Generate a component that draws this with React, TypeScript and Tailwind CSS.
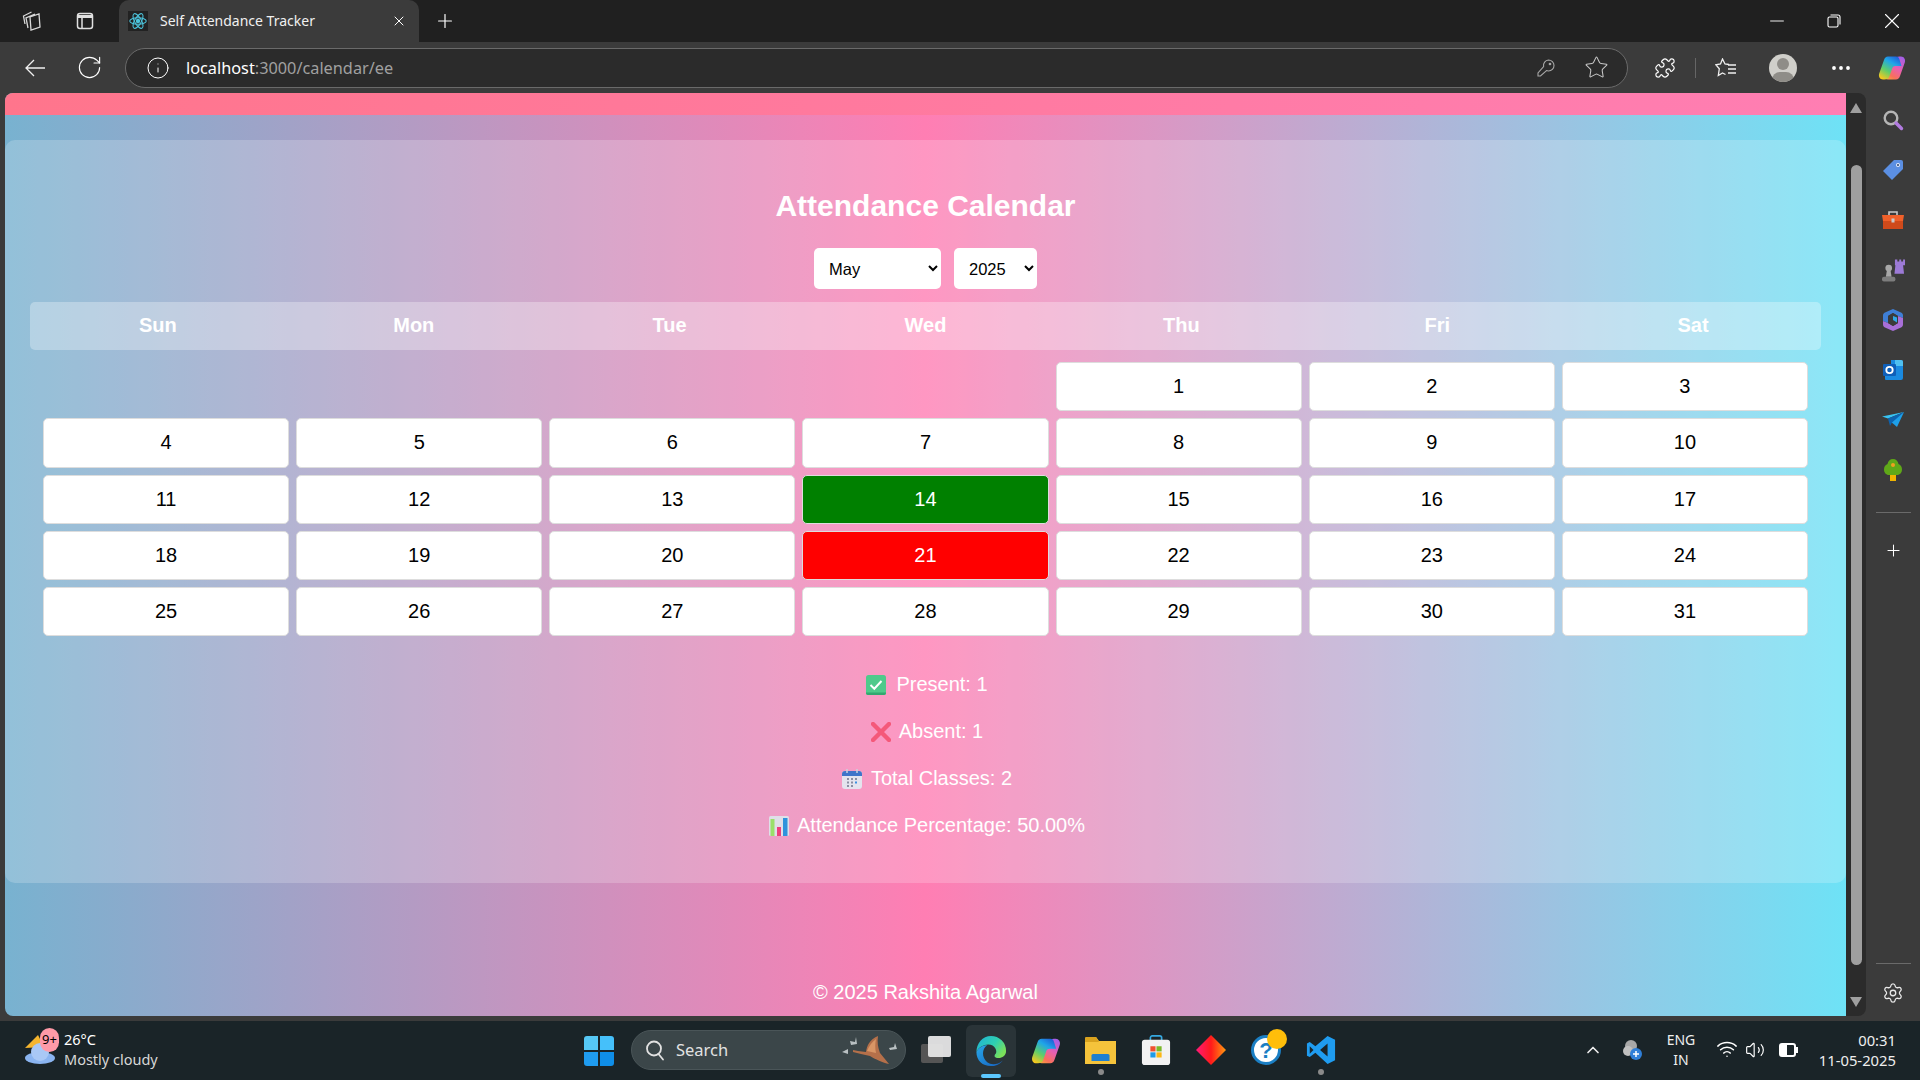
import { ChevronUp, Plus, X, Minus, RotateCw, Info, Star, Puzzle, MoreHorizontal, Settings, Volume2, Wifi } from "lucide-react";

const weekDays = ["Sun", "Mon", "Tue", "Wed", "Thu", "Fri", "Sat"];
const days = Array.from({ length: 31 }, (_, i) => i + 1);

function ReactIcon() {
  return (
    <svg width="18" height="18" viewBox="0 0 24 24" fill="none" stroke="#4cc4dc" strokeWidth="1.4">
      <circle cx="12" cy="12" r="2.2" fill="#4cc4dc" />
      <ellipse cx="12" cy="12" rx="11" ry="4.4" />
      <ellipse cx="12" cy="12" rx="11" ry="4.4" transform="rotate(60 12 12)" />
      <ellipse cx="12" cy="12" rx="11" ry="4.4" transform="rotate(120 12 12)" />
    </svg>
  );
}

function CopilotIcon({ size = 28 }: { size?: number }) {
  const ribbon =
    "M10 2.500H18C20 2.500 21 3.500 21.500 5.500L23.500 12H17.500C15.500 12 14.500 13 14 15L11.500 22C10.800 24.500 9 25.500 6.500 25.500H5C2 25.500.2 22.500 1.200 19.500L6 6C6.700 3.700 8 2.500 10 2.500z";
  return (
    <svg width={size} height={size} viewBox="0 0 28 28">
      <defs>
        <linearGradient id="cpa" x1="0.2" y1="1" x2="0.8" y2="0">
          <stop offset="0" stopColor="#f6c81e" />
          <stop offset="0.35" stopColor="#5fce6a" />
          <stop offset="0.7" stopColor="#1fa6e8" />
          <stop offset="1" stopColor="#1f5fd8" />
        </linearGradient>
        <linearGradient id="cpb" x1="0.2" y1="1" x2="0.8" y2="0">
          <stop offset="0" stopColor="#a45fe6" />
          <stop offset="0.45" stopColor="#e85fb0" />
          <stop offset="0.8" stopColor="#f8705a" />
          <stop offset="1" stopColor="#f8a53c" />
        </linearGradient>
      </defs>
      <path d={ribbon} fill="url(#cpb)" transform="rotate(180 14 14)" />
      <path d={ribbon} fill="url(#cpa)" />
    </svg>
  );
}

function CalendarCell({ day }: { day: number }) {
  let tone = "bg-white text-black";
  if (day === 14) tone = "bg-[#008000] text-white";
  if (day === 21) tone = "bg-[#ff0000] text-white";
  return (
    <div className={`h-[49.300px] pb-[1px] rounded-[5px] border border-[#ddd] flex items-center justify-center text-[20px] ${tone}`}>
      {day}
    </div>
  );
}

function CheckEmoji() {
  return (
    <svg width="20" height="20" viewBox="0 0 20 20" className="shrink-0">
      <rect width="20" height="20" rx="2.500" fill="#4fca8b" />
      <path d="M0 17.500V18a2 2 0 0 0 2 2h16a2 2 0 0 0 2-2v-.500z" fill="#32a870" />
      <path d="M4.500 10l3.800 3.700L15.500 6" fill="none" stroke="#fff" strokeWidth="2" />
    </svg>
  );
}

function CrossEmoji() {
  return (
    <svg width="20" height="20" viewBox="0 0 20 20" className="shrink-0">
      <path d="M2 2l16 16M18 2L2 18" stroke="#f4597a" strokeWidth="4.400" strokeLinecap="round" />
    </svg>
  );
}

function CalendarEmoji() {
  return (
    <svg width="20" height="20" viewBox="0 0 20 20" className="shrink-0">
      <rect y="2" width="20" height="18" rx="3" fill="#e4e4ee" />
      <path d="M0 7V5a3 3 0 0 1 3-3h14a3 3 0 0 1 3 3v2z" fill="#3f74c9" />
      <path d="M5 0v4M15 0v4" stroke="#c9d2de" strokeWidth="1.500" />
      <path d="M5 9h2v2H5zM9 9h2v2H9zM13 9h2v2h-2zM5 12.500h2v2H5zM9 12.500h2v2H9zM5 16h2v2H5zM9 16h2v2H9z" fill="#8b8fa3" />
      <path d="M13 12.500h2v2h-2z" fill="#3b8fe0" />
    </svg>
  );
}

function ChartEmoji() {
  return (
    <svg width="20" height="20" viewBox="0 0 20 20" className="shrink-0">
      <rect width="20" height="20" rx="1.500" fill="#dfdfe8" />
      <rect x="1.500" y="3" width="4" height="17" fill="#9ae06a" />
      <rect x="8" y="11" width="4" height="9" fill="#ee3f7c" />
      <rect x="14" y="2" width="4.500" height="18" fill="#2f93dc" />
    </svg>
  );
}

function SideIcons() {
  return (
    <div className="w-[54px] flex flex-col items-center text-white">
      <div className="h-[50px] flex items-center justify-center mt-[2px]">
        <svg width="22" height="22" viewBox="0 0 22 22" fill="none">
          <circle cx="9" cy="9" r="6.300" stroke="#b5b5b5" strokeWidth="2.400" />
          <path d="M14 14l5.500 5.500" stroke="#b27be0" strokeWidth="3.400" strokeLinecap="round" />
        </svg>
      </div>
      <div className="h-[50px] flex items-center justify-center">
        <svg width="22" height="22" viewBox="0 0 22 22">
          <path d="M12 1h7a2 2 0 0 1 2 2v7L10 21 1 12z" fill="#5b8fe3" />
          <circle cx="16" cy="6" r="2" fill="#e8eefb" />
          <circle cx="16" cy="6" r="1" fill="#28406e" />
        </svg>
      </div>
      <div className="h-[50px] flex items-center justify-center">
        <svg width="22" height="20" viewBox="0 0 22 20">
          <path d="M7 5V2h8v3" fill="none" stroke="#c9c9c9" strokeWidth="1.600" />
          <path d="M0 5h22l-1 6H1z" fill="#f0602a" />
          <path d="M1 11h20v8H1z" fill="#cf4a1b" />
          <rect x="9.500" y="8.500" width="3" height="4" fill="#c9c9c9" />
        </svg>
      </div>
      <div className="h-[50px] flex items-center justify-center">
        <svg width="23" height="23" viewBox="0 0 24 23">
          <path d="M13.500 0H16v2h2V0h2v2h2V0h2v6h-2l1 9H13l1-9h-.500z" fill="#9c7ad6" />
          <circle cx="7" cy="9" r="3.500" fill="#a8a8a8" />
          <path d="M5 12h4l1 6H4z" fill="#a8a8a8" />
          <rect y="18" width="14" height="5" rx="2" fill="#7d7d7d" />
        </svg>
      </div>
      <div className="h-[50px] flex items-center justify-center">
        <svg width="20" height="22" viewBox="0 0 20 22">
          <path d="M10 0l8 3.500c1.300.600 2 1.500 2 3V9l-5-2-5-3-5 3v7l-5-2V6.500c0-1.500.700-2.400 2-3z" fill="#3f7fd6" />
          <path d="M0 12l5 2 5 3 5-3V7l5 2v6.500c0 1.500-.700 2.400-2 3L10 22l-8-3.500c-1.300-.600-2-1.500-2-3z" fill="#a86fd8" />
          <path d="M5 7l5-3 5 3v7l-5 3-5-3z" fill="#3b3b3b" />
          <path d="M10 7l4 1.500v5L10 11z" fill="#2fa8e8" />
        </svg>
      </div>
      <div className="h-[50px] flex items-center justify-center">
        <svg width="20" height="20" viewBox="0 0 20 20">
          <path d="M8 0h10a2 2 0 0 1 2 2v16a2 2 0 0 1-2 2H3a1 1 0 0 1-1-1v-3h6z" fill="#1a8ae0" />
          <path d="M12 0h6a2 2 0 0 1 2 2v4h-8z" fill="#50c0f0" />
          <rect y="4" width="13" height="12" rx="1" fill="#0f5fb8" />
          <circle cx="6.500" cy="10" r="3.200" fill="none" stroke="#fff" strokeWidth="1.800" />
        </svg>
      </div>
      <div className="h-[50px] flex items-center justify-center">
        <svg width="22" height="16" viewBox="0 0 22 16">
          <path d="M0 4.500L22 0 6 6.500z" fill="#38c3f2" />
          <path d="M22 0L15 15 8 9z" fill="#1e9fe8" />
          <path d="M6 6.500L8 14l2-3.500L22 0z" fill="#0d63b0" />
        </svg>
      </div>
      <div className="h-[50px] flex items-center justify-center">
        <svg width="18" height="22" viewBox="0 0 18 22">
          <rect x="6" y="15" width="6" height="7" fill="#f0b400" />
          <path d="M9 0c3 0 5 2 5.500 5 2.500 1 3.500 3 3.500 5.500 0 3-2 5.500-5 5.500H5c-3 0-5-2.500-5-5.500C0 8 1 6 3.500 5 4 2 6 0 9 0z" fill="#5fa818" />
          <circle cx="9" cy="6" r="2" fill="#f0a020" />
        </svg>
      </div>
      <div className="w-[35px] h-[1px] bg-[#6a6a6a] mt-[17px] mb-[28px]" />
      <Plus size={19} strokeWidth={1.300} />
      <div className="flex-1" />
      <div className="w-[35px] h-[1px] bg-[#6a6a6a] mb-[18px]" />
      <Settings size={22} strokeWidth={1.400} className="mb-[12px] text-[#e8e8e8]" />
    </div>
  );
}

function Taskbar() {
  return (
    <div className="h-[59px] bg-[#1a2428] flex items-center relative text-white">
      <div className="absolute left-[24px] top-[7px] w-[36px] h-[42px]">
        <svg width="32" height="36" viewBox="0 0 32 36" className="absolute left-0 top-[1px]">
          <path d="M14 6l6 12-19 1z" fill="#f5b52e" />
          <ellipse cx="16" cy="29" rx="15" ry="6" fill="#8ab4f0" />
          <circle cx="16" cy="23" r="9" fill="#a9c8f5" />
        </svg>
        <div className="absolute left-[16px] top-0 w-[19px] h-[24px] rounded-full bg-[#ff9aa8] text-black text-[13px] font-['Noto_Sans'] flex items-center justify-center">
          9+
        </div>
      </div>
      <div className="ml-[64px] pb-[3px] font-['Noto_Sans',sans-serif] text-[14.500px] leading-[20px]">
        <div>26°C</div>
        <div className="text-[#d7d7d7]">Mostly cloudy</div>
      </div>
      <div className="absolute left-[584px] top-[15px]">
        <svg width="30" height="30" viewBox="0 0 30 30">
          <path d="M0 3a3 3 0 0 1 3-3h11v14H0z" fill="#56c8f5" />
          <path d="M16 0h11a3 3 0 0 1 3 3v11H16z" fill="#45c0fa" />
          <path d="M0 16h14v14H3a3 3 0 0 1-3-3z" fill="#1f9cf0" />
          <path d="M16 16h14v11a3 3 0 0 1-3 3H16z" fill="#0f8ee8" />
        </svg>
      </div>
      <div className="absolute left-[631px] top-[9px] w-[275px] h-[40px] rounded-full bg-[#3b4649] border border-[#4a5558] flex items-center pl-[12px] font-['Noto_Sans',sans-serif] text-[16.500px] text-[#e2e2e2]">
        <svg width="22" height="22" viewBox="0 0 22 22" fill="none" stroke="#e2e2e2" strokeWidth="1.800">
          <circle cx="10" cy="9.500" r="7" />
          <path d="M14.500 15l4.500 5.500" strokeLinecap="round" />
        </svg>
        <span className="ml-[10px]">Search</span>
        <svg width="62" height="30" viewBox="0 0 62 30" className="ml-auto mr-[4px]">
          <path d="M14 15l5 1 8 1c1-6 3-12 12-16-1 6 0 12 2 17l9 11c-6-1-14-5-19-8l-9-2-8-2z" fill="#b5704a" />
          <path d="M28 16c2-5 5-9 9-12-1 5-1 9 0 14z" fill="#d99666" />
          <path d="M11 6l5 1 1-5 1 7-6 1zM3 17l6-3 0 5zM50 13l5-1 1-4 2 6-7 1z" fill="#b9c0c2" />
        </svg>
      </div>
      <div className="absolute left-[920px] top-[14px] w-[32px] h-[30px]">
        <div className="absolute left-[1px] top-[9px] w-[22px] h-[19px] bg-[#555] rounded-[2px]" />
        <div className="absolute left-[8px] top-[1px] w-[23px] h-[21px] bg-[#e6e6e6] opacity-95 rounded-[2px]" />
      </div>
      <div className="absolute left-[966px] top-[4px] w-[50px] h-[52px] rounded-[6px] bg-[#2a3438] flex items-center justify-center">
        <svg width="32" height="32" viewBox="0 0 34 34">
          <defs>
            <linearGradient id="edge" x1="0" y1="0" x2="1" y2="0.600">
              <stop offset="0" stopColor="#1fb0d8" />
              <stop offset="0.6" stopColor="#2fd0b0" />
              <stop offset="1" stopColor="#7be05a" />
            </linearGradient>
            <linearGradient id="edgeb" x1="0" y1="0" x2="1" y2="1">
              <stop offset="0" stopColor="#28a8e8" />
              <stop offset="1" stopColor="#1560c0" />
            </linearGradient>
          </defs>
          <path d="M17 1A16 16 0 0 1 33 17C33 22 29 24.500 25 24.500C21 24.500 19.500 22.500 22 20C24 17 21.500 10 14 10C9 10 4 13 1.500 18C1.500 9 8 1 17 1z" fill="url(#edge)" />
          <path d="M1.500 18C4 13 9 11 13 11C7 15 7 24 13 29C17 32 24 32 29.500 27C26 32 21 33 17 33C8 33 1.500 27 1.500 18z" fill="url(#edgeb)" />
        </svg>
        <div className="absolute bottom-[-1px] w-[20px] h-[4px] rounded-full bg-[#5cc8ff]" />
      </div>
      <div className="absolute left-[1031px] top-[15px]"><CopilotIcon size={30} /></div>
      <div className="absolute left-[1085px] top-[16px]">
        <svg width="31" height="27" viewBox="0 0 31 27">
          <path d="M0 1.500A1.500 1.500 0 0 1 1.500 0H11l3 4h17v23H0z" fill="#f5c33b" />
          <path d="M0 1.500A1.500 1.500 0 0 1 1.500 0H11l3 5H0z" fill="#d9a21e" />
          <path d="M8 17h15a1.500 1.500 0 0 1 1.500 1.500V24H6.500v-5.500A1.500 1.500 0 0 1 8 17z" fill="#1f7fd0" />
        </svg>
      </div>
      <div className="absolute left-[1098px] top-[48px] w-[6px] h-[6px] rounded-full bg-[#8a8a8a]" />
      <div className="absolute left-[1141px] top-[14px]">
        <svg width="30" height="30" viewBox="0 0 30 32">
          <path d="M9 7V3a2 2 0 0 1 2-2h8a2 2 0 0 1 2 2v4" fill="none" stroke="#35a8e0" strokeWidth="1.800" />
          <rect y="5" width="30" height="27" rx="3" fill="#f2f2f2" />
          <rect x="9" y="12" width="5.500" height="5.500" fill="#f05030" />
          <rect x="15.500" y="12" width="5.500" height="5.500" fill="#7bb829" />
          <rect x="9" y="18.500" width="5.500" height="5.500" fill="#1f9be8" />
          <rect x="15.500" y="18.500" width="5.500" height="5.500" fill="#fcb814" />
        </svg>
      </div>
      <div className="absolute left-[1196px] top-[14px]">
        <svg width="30" height="30" viewBox="0 0 30 30">
          <defs>
            <linearGradient id="gem" x1="0" y1="0" x2="1" y2="0">
              <stop offset="0" stopColor="#ff1a78" />
              <stop offset="0.5" stopColor="#ff1a1a" />
              <stop offset="1" stopColor="#ff9a10" />
            </linearGradient>
          </defs>
          <path d="M15 0l15 15-15 15L0 15z" fill="url(#gem)" />
        </svg>
      </div>
      <div className="absolute left-[1251px] top-[8px] w-[40px] h-[42px]">
        <div className="absolute left-0 top-[6px] w-[30px] h-[30px] rounded-full bg-white flex items-center justify-center text-[#1b7fc4] text-[22px] font-bold font-['Liberation_Sans'] border-[3px] border-[#1b7fc4]">
          ?
        </div>
        <div className="absolute left-[16px] top-0 w-[20px] h-[20px] rounded-full bg-[#ffbe0a]" />
      </div>
      <div className="absolute left-[1306px] top-[14px]">
        <svg width="30" height="30" viewBox="0 0 32 32">
          <path d="M23 1l8 4v22l-8 4-13-12-6 4.500-3-1.500v-13l3-1.500 6 4.500z" fill="#1f9cf0" />
          <path d="M23 9l-8 7 8 7z" fill="#1a2428" />
          <path d="M4 12l4 4-4 4z" fill="#1a2428" />
        </svg>
      </div>
      <div className="absolute left-[1318px] top-[48px] w-[6px] h-[6px] rounded-full bg-[#8a8a8a]" />
      <ChevronUp size={20} strokeWidth={2} className="absolute left-[1583px] top-[19px] text-[#eee]" />
      <div className="absolute left-[1621px] top-[17px]">
        <svg width="22" height="24" viewBox="0 0 22 24">
          <circle cx="10" cy="8" r="6" fill="#a8a8a8" />
          <circle cx="7" cy="13" r="5" fill="#c0c0c0" />
          <circle cx="15" cy="16" r="6" fill="#2f7fd8" />
          <path d="M12 16h6M15 13v6" stroke="#fff" strokeWidth="1.500" />
        </svg>
      </div>
      <div className="absolute left-[1662px] top-[9px] w-[38px] text-center font-['Noto_Sans',sans-serif] text-[14px] leading-[20px] text-[#eee]">
        <div>ENG</div>
        <div>IN</div>
      </div>
      <Wifi size={22} strokeWidth={1.700} className="absolute left-[1716px] top-[17px]" />
      <Volume2 size={20} strokeWidth={1.400} className="absolute left-[1745px] top-[19px]" />
      <div className="absolute left-[1779px] top-[22px] w-[17px] h-[14px] rounded-[3px] border-2 border-white flex">
        <div className="w-[6px] bg-white" />
        <div className="absolute right-[-4px] top-[2px] w-[2px] h-[6px] bg-white" />
      </div>
      <div className="absolute right-[24px] top-[9px] text-right font-['Noto_Sans',sans-serif] text-[14.800px] leading-[20px] text-[#eee]">
        <div>00:31</div>
        <div>11-05-2025</div>
      </div>
    </div>
  );
}

export default function App() {
  return (
    <div className="h-screen w-screen overflow-hidden flex flex-col bg-[#3b3b3b] font-['Liberation_Sans',Arial,sans-serif]">
      {/* title bar */}
      <div className="h-[42px] bg-[#202020] flex items-center text-white shrink-0 font-['Noto_Sans',sans-serif]">
        <svg width="22" height="22" viewBox="0 0 22 22" fill="none" stroke="#d8d8d8" strokeWidth="1.300" className="ml-[22px]">
          <path d="M8 7l9-3 1 13-9 3zM6 18L4 8l9-4M3 14L1.500 6l8-4" />
        </svg>
        <svg width="18" height="18" viewBox="0 0 18 18" className="ml-[32px]" fill="none" stroke="#e0e0e0" strokeWidth="1.500">
          <rect x="1.500" y="1.500" width="15" height="15" rx="2.500" />
          <path d="M1.500 4.500h15" strokeWidth="3" />
          <path d="M6 5v11" />
        </svg>
        <div className="ml-[25px] h-[42px] w-[300px] bg-[#3b3b3b] rounded-t-[10px] flex items-center pl-[9px] pr-[12px]">
          <div className="w-[20px] h-[20px] bg-[#222] flex items-center justify-center"><ReactIcon /></div>
          <span className="ml-[12px] pb-[1px] text-[14px] text-[#f0f0f0]">Self Attendance Tracker</span>
          <X size={16} strokeWidth={1.500} className="ml-auto" />
        </div>
        <Plus size={22} strokeWidth={1.300} className="ml-[15px]" />
        <div className="flex-1" />
        <Minus size={22} strokeWidth={1} className="mr-[39px]" />
        <svg width="14" height="14" viewBox="0 0 14 14" fill="none" stroke="#fff" strokeWidth="1.100" className="mr-[38px]">
          <rect x="1" y="3" width="10" height="10" rx="1.500" />
          <path d="M3.500 1H11a2 2 0 0 1 2 2v7.500" />
        </svg>
        <X size={26} strokeWidth={1} className="mr-[15px]" />
      </div>

      {/* toolbar */}
      <div className="h-[51px] flex items-center text-white shrink-0 font-['Noto_Sans',sans-serif]">
        <svg width="20" height="20" viewBox="0 0 20 20" fill="none" stroke="#f0f0f0" strokeWidth="1.300" className="ml-[25px] shrink-0">
          <path d="M20 10H1M9 2l-8 8 8 8" />
        </svg>
        <RotateCw size={27} strokeWidth={1} className="ml-[31px] shrink-0" />
        <div className="ml-[22px] w-[1503px] shrink-0 h-[40px] rounded-full bg-[#2b2b2b] border border-[#6a6a6a] flex items-center pl-[20px] pr-[18px]">
          <Info size={24} strokeWidth={1} />
          <div className="ml-[16px] pt-[1px] text-[16.300px]">
            localhost<span className="text-[#a0a0a0]">:3000/calendar/ee</span>
          </div>
          <div className="flex-1" />
          <svg width="18" height="18" viewBox="0 0 18 18" fill="none" stroke="#a8a8a8" strokeWidth="1.100">
            <path d="M11.500 1a5.500 5.500 0 0 1 0 11c-.700 0-1.400-.100-2-.400L3.500 17H1v-3l5.600-6.500A5.500 5.500 0 0 1 11.500 1z" />
            <circle cx="13" cy="5" r=".8" fill="#a8a8a8" />
          </svg>
          <Star size={25} strokeWidth={1} className="ml-[29px] text-[#c8c8c8]" />
        </div>
        <Puzzle size={22} strokeWidth={1.300} className="ml-[26px] shrink-0" />
        <div className="ml-[19px] w-[1px] h-[20px] bg-[#666] shrink-0" />
        <svg width="21" height="20" viewBox="0 0 21 20" fill="none" stroke="#f0f0f0" strokeWidth="1.300" className="ml-[19px] shrink-0">
          <path d="M14 6.500l-4-.500L7.500 1 5.500 6 .800 6.800l3.500 4-1 6.700L7.500 15l3 1.500" />
          <path d="M13 7h8M13 11h8M13 15h8" />
        </svg>
        <div className="ml-[33px] w-[28px] h-[28px] rounded-full bg-[#d0cfca] overflow-hidden relative shrink-0">
          <div className="absolute left-[8px] top-[4px] w-[12px] h-[12px] rounded-full bg-[#8f8d88]" />
          <div className="absolute left-[3px] top-[18px] w-[22px] h-[16px] rounded-full bg-[#8f8d88]" />
        </div>
        <MoreHorizontal size={24} strokeWidth={1.800} className="ml-[32px] shrink-0" />
        <div className="ml-[25px] shrink-0"><CopilotIcon /></div>
      </div>

      {/* window body */}
      <div className="h-[923px] flex shrink-0 pl-[5px]">
        <div className="w-[1841px] rounded-tl-[8px] rounded-bl-[8px] overflow-hidden flex flex-col bg-[linear-gradient(90deg,#78b2d0,#ff7eb3,#6ee2f6)]">
          <div className="h-[22px] bg-[linear-gradient(90deg,#ff758c,#ff7eb3)] shrink-0" />
          <div className="mt-[25px] h-[743px] rounded-[10px] bg-white/20 px-[25px] flex flex-col items-center text-white shrink-0">
            <h1 className="mt-[46px] text-[30px] leading-[40px] font-bold">Attendance Calendar</h1>
            <div className="mt-[22px] flex gap-[13px]">
              <select defaultValue="May" className="w-[127px] h-[41px] rounded-[5px] bg-white text-black text-[16.500px] pl-[11px]">
                <option>May</option>
              </select>
              <select defaultValue="2025" className="w-[83px] h-[41px] rounded-[5px] bg-white text-black text-[16.500px] pl-[11px]">
                <option>2025</option>
              </select>
            </div>
            <div className="mt-[13px] w-full h-[48px] pb-[2px] rounded-[5px] bg-white/30 grid grid-cols-7 items-center text-center text-[20px] font-bold">
              {weekDays.map((d) => (
                <div key={d}>{d}</div>
              ))}
            </div>
            <div className="mt-[12px] w-full px-[13px] grid grid-cols-7 gap-x-[7px] gap-y-[7px]">
              <div className="col-span-4" />
              {days.map((d) => (
                <CalendarCell key={d} day={d} />
              ))}
            </div>
            <div className="mt-[37px] pl-[3px] flex flex-col items-center gap-[24px] text-[20px] leading-[23px]">
              <div className="flex items-center gap-[10px]"><CheckEmoji /><span>Present: 1</span></div>
              <div className="flex items-center gap-[8px]"><CrossEmoji /><span>Absent: 1</span></div>
              <div className="flex items-center gap-[9px]"><CalendarEmoji /><span>Total Classes: 2</span></div>
              <div className="flex items-center gap-[8px]"><ChartEmoji /><span>Attendance Percentage: 50.00%</span></div>
            </div>
          </div>
          <div className="mt-[98px] text-center text-white text-[20px] leading-[23px]">© 2025 Rakshita Agarwal</div>
        </div>

        {/* scrollbar */}
        <div className="w-[20px] bg-[#2b2b2b] rounded-r-[8px] flex flex-col items-center">
          <div className="mt-[10px] w-0 h-0 border-l-[6px] border-r-[6px] border-b-[10px] border-l-transparent border-r-transparent border-b-[#9f9f9f]" />
          <div className="mt-[52px] w-[11px] h-[800px] rounded-full bg-[#9f9f9f]" />
          <div className="mt-[32px] w-0 h-0 border-l-[6px] border-r-[6px] border-t-[10px] border-l-transparent border-r-transparent border-t-[#9f9f9f]" />
        </div>
        <SideIcons />
      </div>

      <div className="h-[5px] shrink-0" />
      <Taskbar />
    </div>
  );
}
